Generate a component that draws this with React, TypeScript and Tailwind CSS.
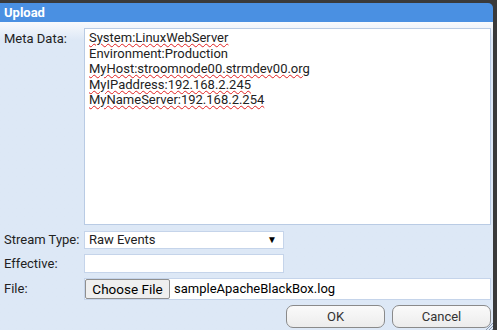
const lines: { text: string; flagged: boolean }[] = [
  { text: "System:LinuxWebServer", flagged: true },
  { text: "Environment:Production", flagged: false },
  { text: "MyHost:stroomnode00.strmdev00.org", flagged: true },
  { text: "MyIPaddress:192.168.2.245", flagged: true },
  { text: "MyNameServer:192.168.2.254", flagged: true },
];

function Label({ children }: { children: React.ReactNode }) {
  return <div className="pl-1 text-[13px] text-[#222]">{children}</div>;
}

export default function App() {
  return (
    <div
      className="w-[497px] h-[330px] bg-[#3a3a3a] pt-[3px] pr-[4px] overflow-hidden"
      style={{ fontFamily: "Roboto, 'Liberation Sans', sans-serif" }}
    >
      <div className="relative flex flex-col h-full rounded-tr-[5px] overflow-hidden">
        <div className="h-[19px] bg-[#4a90e2] flex items-center pl-1 text-[13px] font-bold text-white">
          Upload
        </div>
        <div className="flex-1 bg-linear-to-b from-[#f8fafd] to-[#dde8f6] to-[18px] pt-[6px] pr-[2px] text-[13px] text-[#222]">
          <div className="grid grid-cols-[84px_1fr]">
            <div className="pl-1 pt-[1px]">Meta Data:</div>
            <div className="h-[197px] bg-white border border-[#b9cbe4] pl-1 pt-[1px] leading-[15.5px] text-[#222]">
              {lines.map((l) => (
                <div key={l.text}>
                  <span
                    className={
                      l.flagged
                        ? "underline decoration-wavy decoration-[#e02020] decoration-1 underline-offset-[1px]"
                        : ""
                    }
                  >
                    {l.text}
                  </span>
                </div>
              ))}
            </div>
          </div>

          <div className="grid grid-cols-[84px_200px] items-center mt-[5px]">
            <Label>Stream Type:</Label>
            <div className="h-[18px] bg-white border border-[#c5d4ea] flex items-center justify-between pl-1 pr-[6px]">
              <span>Raw Events</span>
              <span className="text-[10px] text-black">▼</span>
            </div>
          </div>

          <div className="grid grid-cols-[84px_200px] items-center mt-[4px]">
            <Label>Effective:</Label>
            <div className="h-[19px] bg-white border border-[#c5d4ea]" />
          </div>

          <div className="grid grid-cols-[84px_1fr] items-center mt-[5px]">
            <Label>File:</Label>
            <div className="h-[22px] bg-white border border-[#c5d4ea] flex items-center">
              <div className="h-[20px] w-[85px] bg-[#efefef] border border-[#8f8f8f] rounded-[2px] flex items-center justify-center text-[13.5px] text-black">
                Choose File
              </div>
              <span className="ml-1 text-black">sampleApacheBlackBox.log</span>
            </div>
          </div>

          <div className="flex justify-end gap-[7px] mt-[5px]">
            <button className="w-[99px] h-[23px] rounded-[7px] border border-[#8a8a8a] bg-linear-to-b from-[#fafafa] to-[#ececec] text-[13px] text-[#333]">
              OK
            </button>
            <button className="w-[99px] h-[23px] rounded-[7px] border border-[#8a8a8a] bg-linear-to-b from-[#fafafa] to-[#ececec] text-[13px] text-[#333]">
              Cancel
            </button>
          </div>
        </div>
        <svg className="absolute right-0 bottom-0" width="8" height="8" viewBox="0 0 8 8">
          <path d="M8 1 L1 8 M8 4 L4 8 M8 7 L7 8" stroke="#8a9ab0" strokeWidth="1" />
        </svg>
      </div>
    </div>
  );
}
